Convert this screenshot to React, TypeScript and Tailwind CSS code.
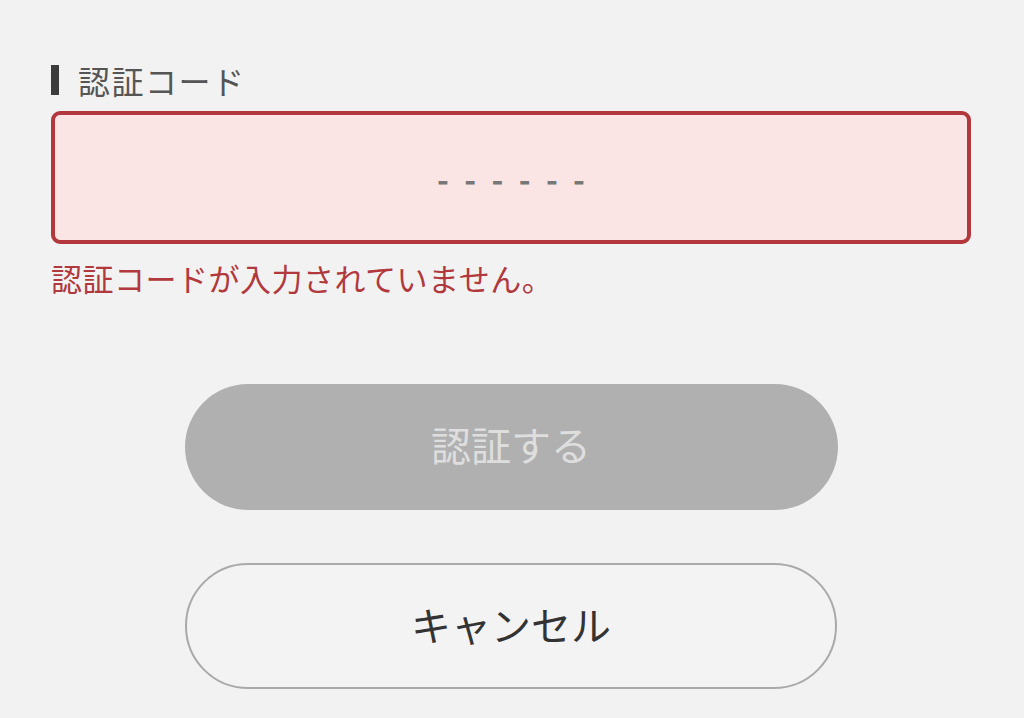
export default function App() {
  return (
    <div
      className="w-[1024px] h-[718px] bg-[#f2f2f2] overflow-hidden"
      style={{ fontFamily: '"Noto Sans CJK JP", "Noto Sans", sans-serif' }}
    >
      <div className="pl-[51px] pr-[53px] pt-[60px]">
        {/* Label */}
        <div className="flex items-center gap-[19px] h-[40px]">
          <span className="w-[8px] h-[30px] bg-[#3c3c3c]" />
          <span className="text-[32px] leading-none text-[#555] tracking-[1.5px]">認証コード</span>
        </div>

        {/* Input */}
        <div className="mt-[11px] h-[133px] rounded-[9px] border-[4px] border-[#b3383d] bg-[#fbe4e4] flex items-center justify-center">
          <input
            readOnly
            placeholder="------"
            className="w-full bg-transparent text-center outline-none text-[32px] font-bold tracking-[0.48em] pl-[0.48em] text-[#777] placeholder:text-[#777]"
          />
        </div>

        {/* Error */}
        <p className="mt-[14px] text-[31px] leading-[40px] tracking-[0.5px] text-[#b1393d]">
          認証コードが入力されていません。
        </p>

        {/* Buttons */}
        <div className="mt-[86px] flex flex-col items-center gap-[53px]">
          <button className="w-[653px] h-[126px] rounded-full bg-[#b0b0b0] text-[40px] leading-none pb-[6px] text-[#dedede]">
            認証する
          </button>
          <button className="w-[652px] h-[126px] rounded-full border-2 border-[#a9a9a9] bg-[#f3f3f3] text-[40px] leading-none pb-[4px] text-[#333]">
            キャンセル
          </button>
        </div>
      </div>
    </div>
  );
}
